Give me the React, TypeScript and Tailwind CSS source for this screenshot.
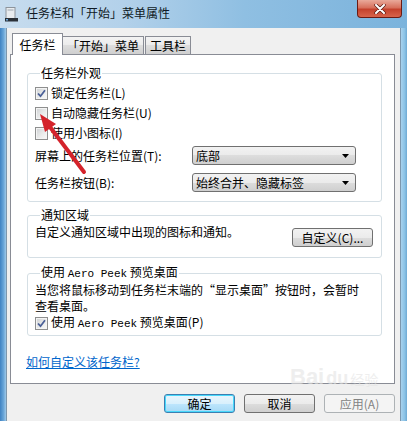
import React from 'react';

const FONT = "font-['Noto_Sans_CJK_SC','Liberation_Sans',sans-serif]";

function Checkbox({ checked }: { checked?: boolean }) {
  return (
    <div className="w-[13px] h-[13px] shrink-0 border border-[#8e8f8f] bg-[#f4f4f4] p-[1px]">
      <div className="w-full h-full bg-[linear-gradient(135deg,#d2d4d6_0%,#ebecec_60%,#f6f6f6_100%)] flex items-center justify-center">
        {checked && (
          <svg width="9" height="9" viewBox="0 0 9 9">
            <path d="M1 4.5 L3.5 7.2 L8 1.2" fill="none" stroke="#4a5f97" strokeWidth="1.8" />
          </svg>
        )}
      </div>
    </div>
  );
}

function CheckRow({ checked, label }: { checked?: boolean; label: string }) {
  return (
    <div className="h-[20px] flex items-center gap-[3px]">
      <Checkbox checked={checked} />
      <span className="text-[12px] leading-[14px]">{label}</span>
    </div>
  );
}

function Dropdown({ value }: { value: string }) {
  return (
    <div className="w-[164px] h-[19px] flex items-center justify-between pl-[3px] pr-[6px] border border-[#707070] rounded-[3px] bg-[linear-gradient(180deg,#f2f2f2_0%,#ebebeb_50%,#dddddd_50%,#cfcfcf_100%)]">
      <span className="text-[12px] leading-[14px]">{value}</span>
      <svg width="7" height="4" viewBox="0 0 7 4">
        <path d="M0 0 H7 L3.5 4 Z" fill="#000" />
      </svg>
    </div>
  );
}

function Button({ label, variant = 'normal', width = 'w-[71px]' }: { label: string; variant?: 'normal' | 'focus' | 'disabled'; width?: string }) {
  const styles = {
    normal: 'border-[#707070] bg-[linear-gradient(180deg,#f2f2f2_0%,#ebebeb_50%,#dddddd_50%,#cfcfcf_100%)] text-black',
    focus: 'border-[#3c7fb1] bg-[linear-gradient(180deg,#eaf6fd_0%,#d9f0fc_50%,#bee6fd_50%,#a7d9f5_100%)] text-black shadow-[inset_0_0_0_1px_#48d8fb]',
    disabled: 'border-[#adb2b5] bg-[#f4f4f4] text-[#838383]',
  }[variant];
  return (
    <div className={`${width} h-[19px] flex items-center justify-center border rounded-[3px] ${styles}`}>
      <span className="text-[12px] leading-[14px]">{label}</span>
    </div>
  );
}

function Group({ title, className, children }: { title: React.ReactNode; className?: string; children: React.ReactNode }) {
  return (
    <fieldset className={`border border-[#d5dfe5] rounded-[3px] pl-[7px] pr-[8px] ${className ?? ''}`}>
      <legend className="ml-[5px] px-[1px] text-[12px] leading-[14px]">{title}</legend>
      {children}
    </fieldset>
  );
}

export default function App() {
  return (
    <div className={`w-[407px] h-[421px] flex flex-col overflow-hidden relative text-black ${FONT}`}>
      {/* Title bar */}
      <div className="h-[28px] shrink-0 flex items-start bg-[linear-gradient(90deg,#c7dcee_0%,#b3d1ea_30%,#8fbfe2_60%,#7bb3dc_100%)]">
        <svg className="mt-[7px] ml-[5px]" width="13" height="15" viewBox="0 0 13 15">
          <rect x="1" y="0.5" width="9" height="11" fill="#e9ecef" stroke="#8d949b" />
          <rect x="2.5" y="2" width="6" height="2" fill="#c3c9cf" />
          <rect x="0" y="11" width="13" height="3.5" fill="#2b3138" />
          <rect x="1" y="12" width="2" height="1.5" fill="#6ea7d8" />
        </svg>
        <span className="ml-[8px] mt-[6px] text-[12px] leading-[14px] text-[#0f1a24]">任务栏和「开始」菜单属性</span>
        <div className="ml-auto mr-[5px] w-[45px] h-[18px] rounded-b-[4px] border border-t-0 border-[#6b1b14] bg-[linear-gradient(180deg,#e9a99a_0%,#d7705c_45%,#c4412c_55%,#d8644b_100%)] flex items-center justify-center">
          <svg width="12" height="10" viewBox="0 0 12 10">
            <path d="M2 1 L10 9 M10 1 L2 9" stroke="#5a1a12" strokeWidth="3.4" strokeLinecap="round" />
            <path d="M2 1 L10 9 M10 1 L2 9" stroke="#ffffff" strokeWidth="2" strokeLinecap="round" />
          </svg>
        </div>
      </div>

      {/* Window body with frame */}
      <div className="flex-1 flex">
        <div className="w-[6px] bg-[linear-gradient(90deg,#3f82c2_0%,#6aa6d8_60%,#9ec8e8_100%)]" />
        <div className="flex-1 flex flex-col bg-[#f0f0f0] border-x border-[#7d97ad] pl-[3px] pr-[5px] pt-[4px]">
          {/* Tabs */}
          <div className="h-[22px] flex items-end pl-[2px]">
            <div className="relative z-10 w-[51px] h-[22px] -mb-px bg-white border border-b-0 border-[#898c95] flex items-center justify-center">
              <span className="text-[12px] leading-[14px]">任务栏</span>
            </div>
            <div className="w-[81px] h-[18px] border border-b-0 border-l-0 border-[#898c95] bg-[linear-gradient(180deg,#f3f3f3_0%,#ebebeb_50%,#dddddd_50%,#cfcfcf_100%)] flex items-center justify-center">
              <span className="text-[12px] leading-[14px]">「开始」菜单</span>
            </div>
            <div className="ml-px w-[46px] h-[18px] border border-b-0 border-[#898c95] bg-[linear-gradient(180deg,#f3f3f3_0%,#ebebeb_50%,#dddddd_50%,#cfcfcf_100%)] flex items-center justify-center">
              <span className="text-[12px] leading-[14px]">工具栏</span>
            </div>
          </div>

          {/* Tab panel */}
          <div className="h-[330px] bg-white border border-[#898c95] flex flex-col pl-[16px] pr-[12px] pt-[11px]">
            <Group title="任务栏外观" className="pb-[9px]">
              <div className="mt-[3px]" />
              <CheckRow checked label="锁定任务栏(L)" />
              <CheckRow label="自动隐藏任务栏(U)" />
              <CheckRow label="使用小图标(I)" />
              <div className="mt-[3px] h-[19px] flex items-center">
                <span className="w-[157px] text-[12px] leading-[14px]">屏幕上的任务栏位置(T):</span>
                <Dropdown value="底部" />
              </div>
              <div className="mt-[8px] h-[19px] flex items-center">
                <span className="w-[157px] text-[12px] leading-[14px]">任务栏按钮(B):</span>
                <Dropdown value="始终合并、隐藏标签" />
              </div>
            </Group>

            <Group title="通知区域" className="mt-[6px] pb-[10px]">
              <div className="mt-[3px] flex items-start justify-between">
                <span className="text-[12px] leading-[14px]">自定义通知区域中出现的图标和通知。</span>
                <div className="mt-[3px]">
                  <Button label="自定义(C)..." width="w-[81px]" />
                </div>
              </div>
            </Group>

            <Group
              title={
                <>
                  使用 <span className="font-['Liberation_Mono',monospace] text-[11px]">Aero Peek</span> 预览桌面
                </>
              }
              className="mt-[7px] pb-[2px]"
            >
              <div className="mt-[1px] flex flex-col text-[12px] leading-[16px]">
                <span>当您将鼠标移动到任务栏末端的“显示桌面”按钮时，会暂时</span>
                <span>查看桌面。</span>
              </div>
              <div className="-mt-px h-[20px] flex items-center gap-[3px]">
                <Checkbox checked />
                <span className="text-[12px] leading-[14px]">
                  使用 <span className="font-['Liberation_Mono',monospace] text-[11px]">Aero Peek</span> 预览桌面(P)
                </span>
              </div>
            </Group>

            <a className="mt-[19px] -ml-px self-start text-[12px] leading-[14px] text-[#0066cc] underline">
              如何自定义该任务栏?
            </a>
          </div>

          {/* Dialog buttons */}
          <div className="mt-[10px] flex justify-end gap-[9px]">
            <Button label="确定" variant="focus" />
            <Button label="取消" />
            <Button label="应用(A)" variant="disabled" />
          </div>
        </div>
        <div className="w-[6px] bg-[linear-gradient(90deg,#a8d2ee_0%,#8cc3e6_60%,#6fa9d3_100%)]" />
      </div>

      {/* Watermark */}
      <div className="absolute left-[290px] top-[366px] flex items-end gap-[2px] pointer-events-none opacity-60">
        <span className="text-[22px] leading-[22px] font-bold text-[#e4e4e4] font-['Liberation_Sans',sans-serif]">Bai</span>
        <span className="text-[18px] leading-[20px] font-bold text-[#e4e4e4] font-['Liberation_Sans',sans-serif]">du</span>
        <span className="text-[14px] leading-[18px] text-[#e4e4e4]">经验</span>
      </div>

      {/* Red annotation arrow */}
      <svg className="absolute left-0 top-0 pointer-events-none" width="407" height="421" viewBox="0 0 407 421">
        <line x1="84" y1="172" x2="50" y2="127" stroke="#d4232b" strokeWidth="4" strokeLinecap="round" />
        <path d="M40 114 L56 124 L45 132 Z" fill="#d4232b" />
      </svg>
    </div>
  );
}
